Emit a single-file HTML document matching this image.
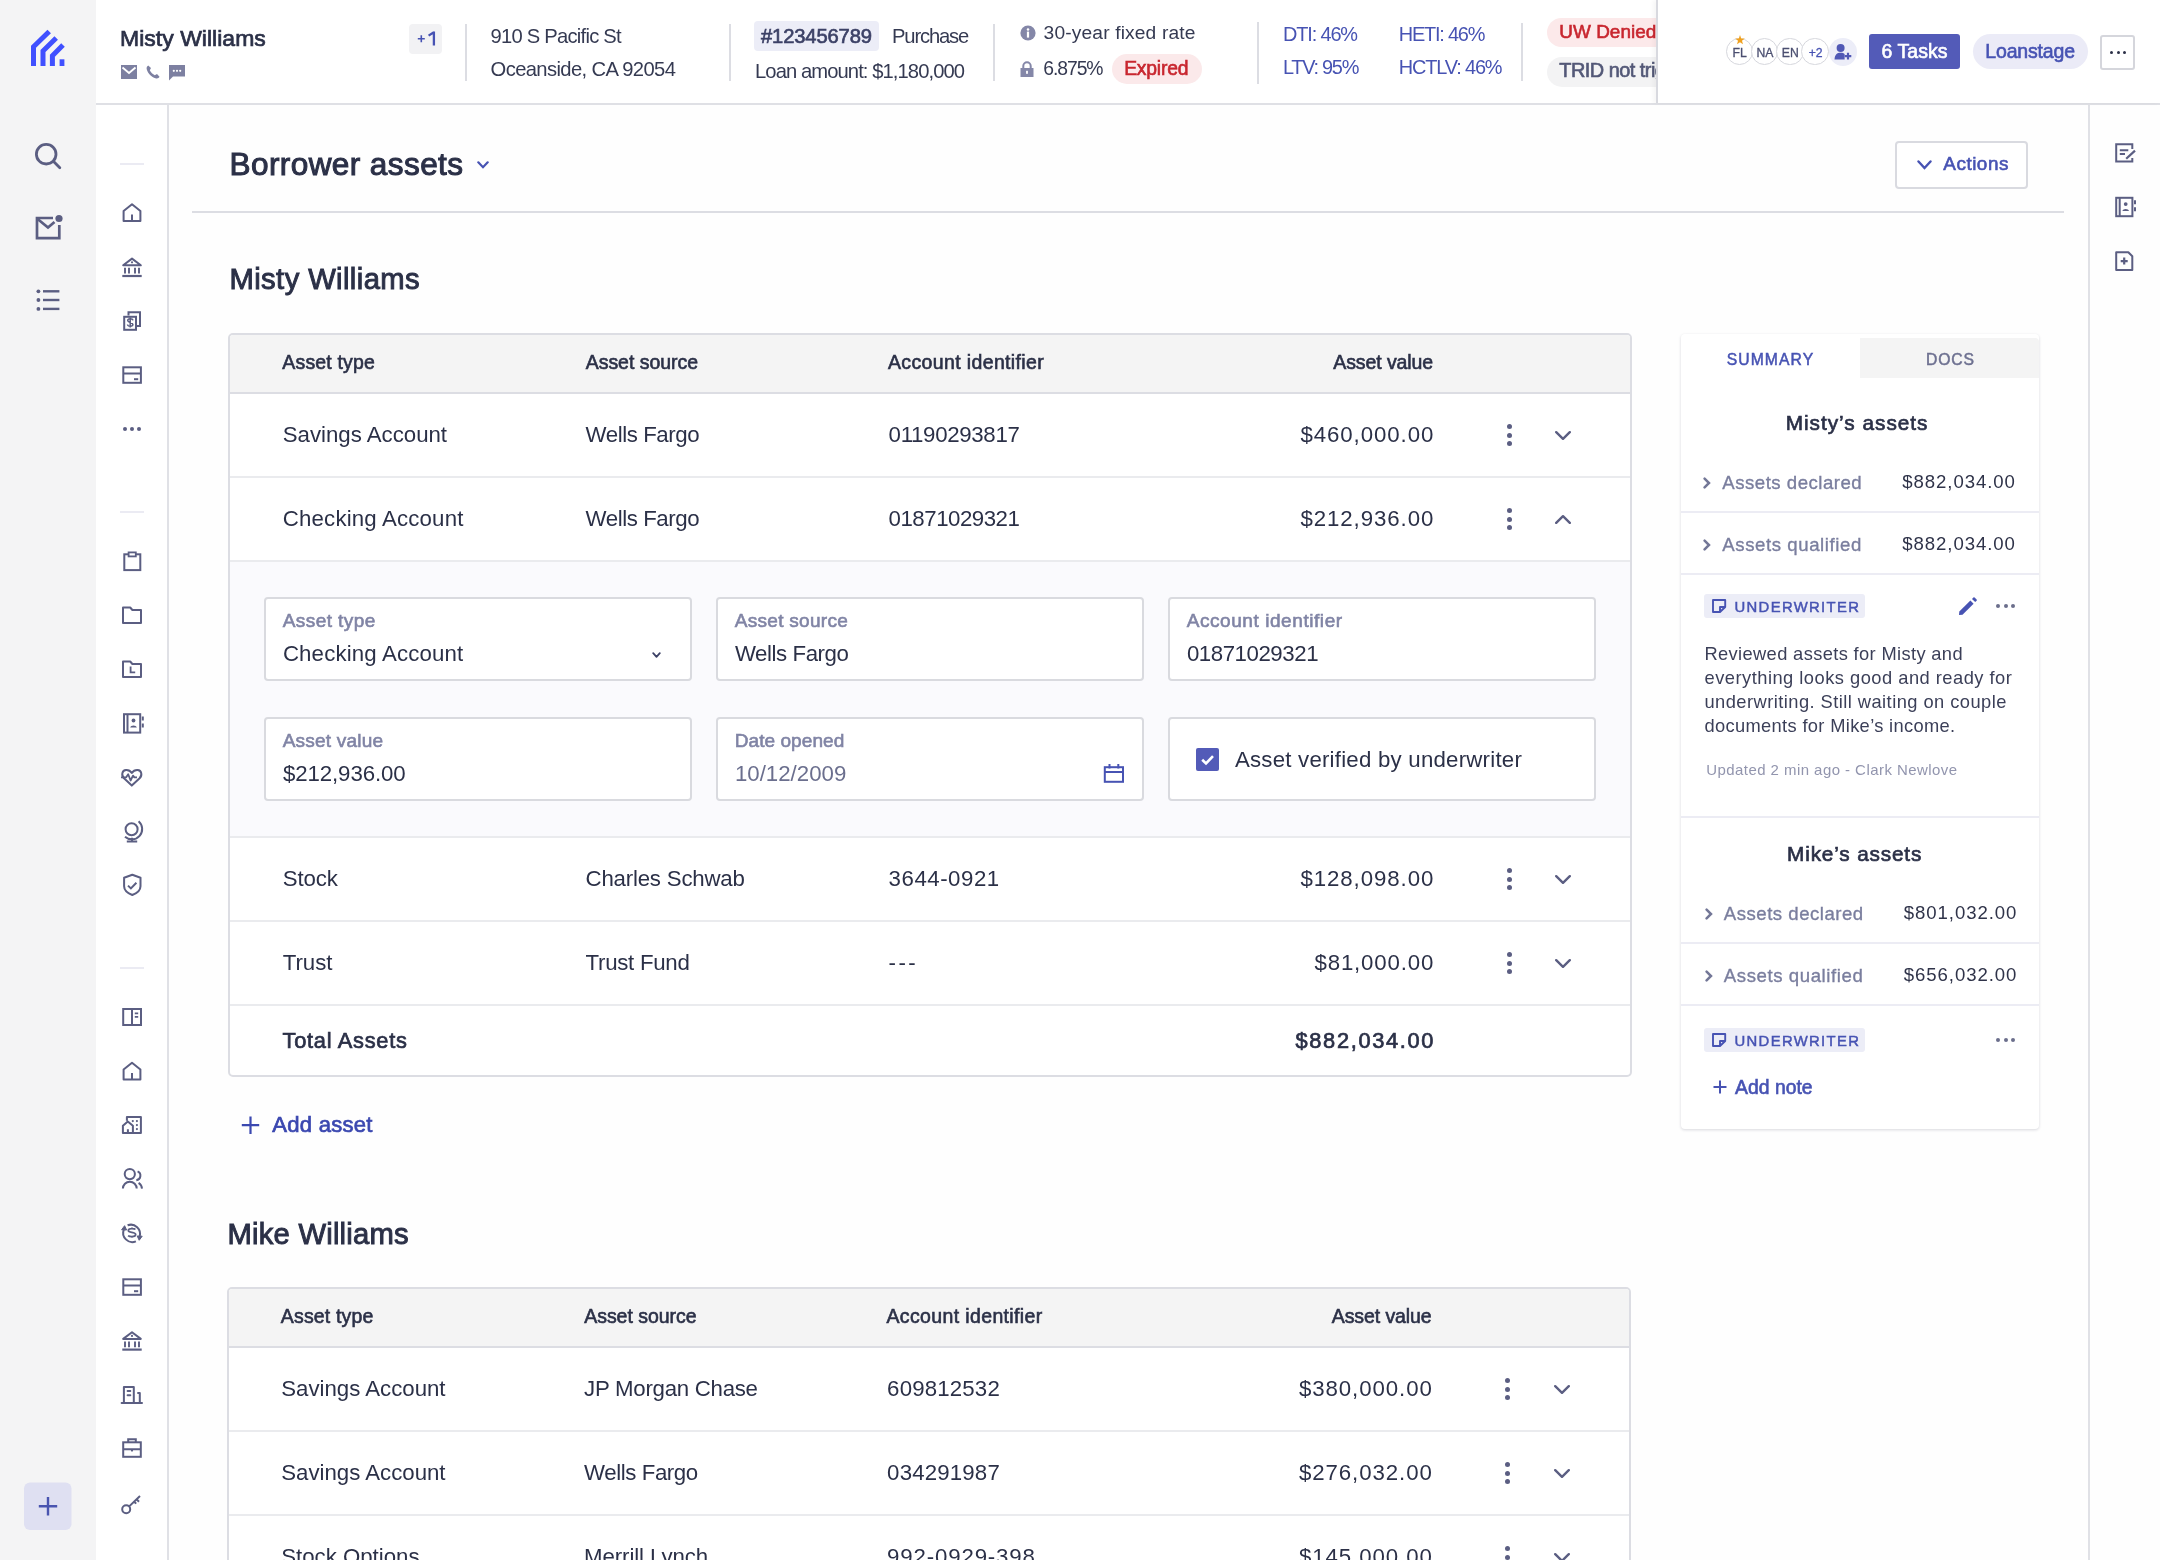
<!DOCTYPE html>
<html><head><meta charset="utf-8"><title>Borrower assets</title>
<style>
html,body{-webkit-font-smoothing:antialiased;margin:0;padding:0;width:2160px;height:1560px;overflow:hidden;background:#fefefe;font-family:"Liberation Sans",sans-serif;}
body>div,body>svg{position:absolute;}
.t{position:absolute;line-height:1;white-space:nowrap;transform:translateZ(0);}
</style></head><body>
<div style="left:0px;top:0px;width:96px;height:1560px;background:#f4f4f5"></div>
<div style="left:96px;top:0px;width:2064px;height:104px;background:#fff"></div>
<div style="left:96px;top:103px;width:2064px;height:2px;background:#dfe0e5"></div>
<div style="left:96px;top:105px;width:71px;height:1455px;background:#fff"></div>
<div style="left:167px;top:105px;width:2px;height:1455px;background:#e0e1e6"></div>
<div style="left:2088px;top:105px;width:2px;height:1455px;background:#e0e1e6"></div>
<div style="left:2090px;top:105px;width:70px;height:1455px;background:#fefefe"></div>
<div class="t" style="left:120.00px;top:27.00px;font-size:22.97px;color:#2b3047;letter-spacing:0.027px;-webkit-text-stroke:0.73px #2b3047;">Misty Williams</div>
<div style="left:409px;top:24px;width:33px;height:30px;background:#f2f2f4;border-radius:4px"></div>
<svg style="position:absolute;left:414px;top:28px;" width="24" height="20" viewBox="0 0 24 20"><path d="M7.3 7.2 V14.2 M3.8 10.7 H10.8" stroke="#4753b3" stroke-width="1.6"/><path d="M19.9 3.6 V17.4 M19.9 4.2 L14.6 7.6" stroke="#4753b3" stroke-width="2.3" stroke-linejoin="round"/></svg>
<svg style="position:absolute;left:121px;top:65px;" width="16" height="14" viewBox="0 0 16 14"><rect x="0" y="0" width="16" height="14" fill="#7d80a1"/><path d="M1.5 2.5 L8 8 L14.5 2.5" stroke="#fff" stroke-width="1.8" fill="none"/></svg>
<svg style="position:absolute;left:145px;top:64px;" width="16" height="16" viewBox="0 0 16 16"><path d="M3.2 1.5 C2 2.2 1.2 3.5 1.8 5.5 C3 9.5 6.5 13 10.5 14.2 C12.5 14.8 13.8 14 14.5 12.8 L12 10 L9.8 11.2 C7.8 10.2 5.8 8.2 4.8 6.2 L6 4 Z" fill="#7d80a1"/></svg>
<svg style="position:absolute;left:169px;top:65px;" width="16" height="16" viewBox="0 0 16 16"><path d="M0 0 H16 V11.5 H4 L0 15.5 Z" fill="#7d80a1"/><circle cx="4.8" cy="5.8" r="1.1" fill="#fff"/><circle cx="8" cy="5.8" r="1.1" fill="#fff"/><circle cx="11.2" cy="5.8" r="1.1" fill="#fff"/></svg>
<div style="left:464.5px;top:24px;width:2px;height:57px;background:#dcdde3"></div>
<div class="t" style="left:490.60px;top:26.00px;font-size:20.20px;color:#353a52;letter-spacing:-0.766px;">910 S Pacific St</div>
<div class="t" style="left:490.60px;top:59.00px;font-size:20.20px;color:#353a52;letter-spacing:-0.618px;">Oceanside, CA 92054</div>
<div style="left:729px;top:24px;width:2px;height:57px;background:#dcdde3"></div>
<div style="left:754px;top:21px;width:125px;height:30px;background:#ecedf7;border-radius:4px"></div>
<div class="t" style="left:761.00px;top:26.00px;font-size:20.20px;color:#3c4166;letter-spacing:-0.149px;-webkit-text-stroke:0.65px #3c4166;">#123456789</div>
<div class="t" style="left:892.00px;top:26.00px;font-size:20.20px;color:#353a52;letter-spacing:-1.148px;">Purchase</div>
<div class="t" style="left:755.00px;top:61.00px;font-size:20.20px;color:#353a52;letter-spacing:-0.911px;">Loan amount: $1,180,000</div>
<div style="left:993px;top:24px;width:2px;height:57px;background:#dcdde3"></div>
<svg style="position:absolute;left:1020px;top:25px;" width="16" height="16" viewBox="0 0 16 16"><circle cx="8" cy="8" r="7.6" fill="#8487a8"/><rect x="6.9" y="6.6" width="2.2" height="6" fill="#fff"/><circle cx="8" cy="4.4" r="1.25" fill="#fff"/></svg>
<div class="t" style="left:1043.60px;top:23.00px;font-size:19.19px;color:#353a52;letter-spacing:0.147px;">30-year fixed rate</div>
<svg style="position:absolute;left:1020px;top:61px;" width="14" height="16" viewBox="0 0 14 16"><path d="M3.3 7 V5 A3.7 3.7 0 0 1 10.7 5 V7" stroke="#8487a8" stroke-width="2" fill="none"/><rect x="0.5" y="7" width="13" height="9" fill="#8487a8"/><rect x="6.1" y="9.8" width="1.8" height="3" fill="#fff"/></svg>
<div class="t" style="left:1043.30px;top:59.00px;font-size:19.33px;color:#353a52;letter-spacing:-1.072px;">6.875%</div>
<div style="left:1111.5px;top:54px;width:90px;height:30px;background:#fbe9ea;border-radius:15px"></div>
<div class="t" style="left:1124.20px;top:59.00px;font-size:19.33px;color:#c8262f;letter-spacing:-0.207px;-webkit-text-stroke:0.62px #c8262f;">Expired</div>
<div style="left:1257px;top:22px;width:2px;height:62px;background:#dcdde3"></div>
<div class="t" style="left:1283.00px;top:25.00px;font-size:19.91px;color:#4753b3;letter-spacing:-1.134px;">DTI: 46%</div>
<div class="t" style="left:1283.00px;top:58.00px;font-size:19.91px;color:#4753b3;letter-spacing:-1.267px;">LTV: 95%</div>
<div class="t" style="left:1398.80px;top:25.00px;font-size:19.91px;color:#4753b3;letter-spacing:-1.202px;">HETI: 46%</div>
<div class="t" style="left:1398.80px;top:58.00px;font-size:19.91px;color:#4753b3;letter-spacing:-1.134px;">HCTLV: 46%</div>
<div style="left:1521px;top:23px;width:2px;height:58px;background:#dcdde3"></div>
<div style="left:1546.7px;top:18.2px;width:140px;height:29.2px;background:#fce9ea;border-radius:15px"></div>
<div class="t" style="left:1559.30px;top:23.00px;font-size:18.90px;color:#c8262f;letter-spacing:0.046px;-webkit-text-stroke:0.60px #c8262f;">UW Denied</div>
<div style="left:1546.7px;top:57px;width:160px;height:29.7px;background:#f3f3f4;border-radius:15px"></div>
<div class="t" style="left:1559.30px;top:61.00px;font-size:19.91px;color:#535877;letter-spacing:-0.520px;-webkit-text-stroke:0.64px #535877;">TRID not triggered</div>
<div style="left:1656px;top:0px;width:504px;height:103px;background:#fff;border-left:2px solid #d8d9df;box-shadow:-3px 0 4px rgba(0,0,0,0.04)"></div>
<div style="left:1725.5px;top:37.8px;width:25.5px;height:25.5px;border:1.5px solid #d6d7dd;border-radius:50%;background:#fff"></div>
<div style="left:1750.8px;top:37.8px;width:25.5px;height:25.5px;border:1.5px solid #d6d7dd;border-radius:50%;background:#fff"></div>
<div style="left:1776.0px;top:37.8px;width:25.5px;height:25.5px;border:1.5px solid #d6d7dd;border-radius:50%;background:#fff"></div>
<div style="left:1801.3px;top:37.8px;width:25.5px;height:25.5px;border:1.5px solid #d6d7dd;border-radius:50%;background:#fff"></div>
<div class="t" style="left:1732.58px;top:47.00px;font-size:12.21px;color:#4b4f70;letter-spacing:0.000px;-webkit-text-stroke:0.30px #4b4f70;">FL</div>
<div class="t" style="left:1756.53px;top:47.00px;font-size:12.21px;color:#4b4f70;letter-spacing:0.000px;-webkit-text-stroke:0.30px #4b4f70;">NA</div>
<div class="t" style="left:1781.83px;top:47.00px;font-size:12.21px;color:#4b4f70;letter-spacing:0.000px;-webkit-text-stroke:0.30px #4b4f70;">EN</div>
<div class="t" style="left:1808.65px;top:47.00px;font-size:12.21px;color:#4753b3;letter-spacing:0.000px;-webkit-text-stroke:0.30px #4753b3;">+2</div>
<div style="left:1828.5px;top:37.8px;width:28.5px;height:28.5px;border-radius:50%;background:#ecedf8"></div>
<svg style="position:absolute;left:1834px;top:43px;" width="18" height="18" viewBox="0 0 18 18"><circle cx="6.6" cy="5" r="4" fill="#5058b5"/><path d="M0.5 16.5 C0.8 11.5 3 9.8 6.6 9.8 C8.5 9.8 9.8 10.3 10.6 11 L10.6 16.5 Z" fill="#5058b5"/><path d="M14 9.8 V16.4 M10.7 13.1 H17.3" stroke="#5058b5" stroke-width="2.2"/></svg>
<svg style="position:absolute;left:1735px;top:35px;" width="10" height="10" viewBox="0 0 10 10"><path d="M5 0 L6.2 3.4 L9.8 3.5 L7 5.7 L8 9.2 L5 7.2 L2 9.2 L3 5.7 L0.2 3.5 L3.8 3.4 Z" fill="#f0a11f"/></svg>
<div style="left:1869.3px;top:33.8px;width:91px;height:35.6px;background:#535bb8;border-radius:3px"></div>
<div class="t" style="left:1881.40px;top:42.00px;font-size:19.48px;color:#fff;letter-spacing:0.091px;-webkit-text-stroke:0.62px #fff;">6 Tasks</div>
<div style="left:1972.6px;top:33.8px;width:115px;height:35.6px;background:#ebebf7;border-radius:18px"></div>
<div class="t" style="left:1985.30px;top:42.00px;font-size:19.48px;color:#4753b3;letter-spacing:-0.148px;-webkit-text-stroke:0.62px #4753b3;">Loanstage</div>
<div style="left:2100.3px;top:34.5px;width:35.2px;height:35px;box-sizing:border-box;border:2px solid #d5d6dc;border-radius:3px;background:#fff"></div>
<div style="left:2110.3px;top:50.5px;width:3px;height:3px;border-radius:50%;background:#2b3047"></div>
<div style="left:2116.5px;top:50.5px;width:3px;height:3px;border-radius:50%;background:#2b3047"></div>
<div style="left:2122.7px;top:50.5px;width:3px;height:3px;border-radius:50%;background:#2b3047"></div>
<div style="left:228px;top:333px;width:1404px;height:744px;box-sizing:border-box;border:2px solid #dcdde3;border-radius:5px;background:#fff;overflow:hidden"></div>
<div style="left:230px;top:335px;width:1400px;height:57px;background:#f4f4f4;border-radius:3px 3px 0 0"></div>
<div style="left:230px;top:391.5px;width:1400px;height:2px;background:#dcdde3"></div>
<div class="t" style="left:282.30px;top:353.00px;font-size:19.48px;color:#2b3047;letter-spacing:0.184px;-webkit-text-stroke:0.62px #2b3047;">Asset type</div>
<div class="t" style="left:585.70px;top:353.00px;font-size:19.48px;color:#2b3047;letter-spacing:-0.011px;-webkit-text-stroke:0.62px #2b3047;">Asset source</div>
<div class="t" style="left:888.00px;top:353.00px;font-size:19.48px;color:#2b3047;letter-spacing:0.377px;-webkit-text-stroke:0.62px #2b3047;">Account identifier</div>
<div class="t" style="left:1333.30px;top:353.00px;font-size:19.48px;color:#2b3047;letter-spacing:-0.080px;-webkit-text-stroke:0.62px #2b3047;">Asset value</div>
<div class="t" style="left:282.80px;top:424.00px;font-size:22.24px;color:#2b3047;letter-spacing:-0.010px;">Savings Account</div>
<div class="t" style="left:585.60px;top:424.00px;font-size:22.24px;color:#2b3047;letter-spacing:-0.423px;">Wells Fargo</div>
<div class="t" style="left:888.60px;top:424.00px;font-size:22.24px;color:#2b3047;letter-spacing:-0.317px;">01190293817</div>
<div class="t" style="left:1300.50px;top:424.00px;font-size:22.24px;color:#2b3047;letter-spacing:0.914px;">$460,000.00</div>
<div style="left:1506.7px;top:423.9px;width:5px;height:5px;border-radius:50%;background:#5b5e82"></div>
<div style="left:1506.7px;top:432.5px;width:5px;height:5px;border-radius:50%;background:#5b5e82"></div>
<div style="left:1506.7px;top:441.1px;width:5px;height:5px;border-radius:50%;background:#5b5e82"></div>
<svg style="position:absolute;left:1555px;top:430.8px;" width="16" height="9" viewBox="0 0 16 9"><path d="M1.2 1.2 L8.0 7.8 L14.8 1.2" stroke="#5b5e82" stroke-width="2.4" fill="none" stroke-linecap="round" stroke-linejoin="round"/></svg>
<div style="left:230px;top:475.5px;width:1400px;height:2px;background:#eaebee"></div>
<div class="t" style="left:282.80px;top:508.00px;font-size:22.24px;color:#2b3047;letter-spacing:0.173px;">Checking Account</div>
<div class="t" style="left:585.60px;top:508.00px;font-size:22.24px;color:#2b3047;letter-spacing:-0.423px;">Wells Fargo</div>
<div class="t" style="left:888.60px;top:508.00px;font-size:22.24px;color:#2b3047;letter-spacing:-0.482px;">01871029321</div>
<div class="t" style="left:1300.50px;top:508.00px;font-size:22.24px;color:#2b3047;letter-spacing:0.914px;">$212,936.00</div>
<div style="left:1506.7px;top:507.9px;width:5px;height:5px;border-radius:50%;background:#5b5e82"></div>
<div style="left:1506.7px;top:516.5px;width:5px;height:5px;border-radius:50%;background:#5b5e82"></div>
<div style="left:1506.7px;top:525.1px;width:5px;height:5px;border-radius:50%;background:#5b5e82"></div>
<svg style="position:absolute;left:1555px;top:514.8px;" width="16" height="9" viewBox="0 0 16 9"><path d="M1.2 7.8 L8.0 1.2 L14.8 7.8" stroke="#5b5e82" stroke-width="2.4" fill="none" stroke-linecap="round" stroke-linejoin="round"/></svg>
<div style="left:230px;top:559.5px;width:1400px;height:2px;background:#eaebee"></div>
<div style="left:230px;top:561.5px;width:1400px;height:274px;background:#fafafd"></div>
<div style="left:230px;top:835.5px;width:1400px;height:2px;background:#eaebee"></div>
<div class="t" style="left:282.80px;top:868.00px;font-size:22.24px;color:#2b3047;letter-spacing:-0.130px;">Stock</div>
<div class="t" style="left:585.60px;top:868.00px;font-size:22.24px;color:#2b3047;letter-spacing:-0.204px;">Charles Schwab</div>
<div class="t" style="left:888.60px;top:868.00px;font-size:22.24px;color:#2b3047;letter-spacing:0.529px;">3644-0921</div>
<div class="t" style="left:1300.50px;top:868.00px;font-size:22.24px;color:#2b3047;letter-spacing:0.914px;">$128,098.00</div>
<div style="left:1506.7px;top:867.9px;width:5px;height:5px;border-radius:50%;background:#5b5e82"></div>
<div style="left:1506.7px;top:876.5px;width:5px;height:5px;border-radius:50%;background:#5b5e82"></div>
<div style="left:1506.7px;top:885.1px;width:5px;height:5px;border-radius:50%;background:#5b5e82"></div>
<svg style="position:absolute;left:1555px;top:874.8px;" width="16" height="9" viewBox="0 0 16 9"><path d="M1.2 1.2 L8.0 7.8 L14.8 1.2" stroke="#5b5e82" stroke-width="2.4" fill="none" stroke-linecap="round" stroke-linejoin="round"/></svg>
<div style="left:230px;top:919.5px;width:1400px;height:2px;background:#eaebee"></div>
<div class="t" style="left:282.80px;top:952.00px;font-size:22.24px;color:#2b3047;letter-spacing:-0.061px;">Trust</div>
<div class="t" style="left:585.60px;top:952.00px;font-size:22.24px;color:#2b3047;letter-spacing:-0.279px;">Trust Fund</div>
<div class="t" style="left:888.60px;top:952.00px;font-size:22.24px;color:#2b3047;letter-spacing:2.412px;">---</div>
<div class="t" style="left:1314.50px;top:952.00px;font-size:22.24px;color:#2b3047;letter-spacing:0.832px;">$81,000.00</div>
<div style="left:1506.7px;top:951.9px;width:5px;height:5px;border-radius:50%;background:#5b5e82"></div>
<div style="left:1506.7px;top:960.5px;width:5px;height:5px;border-radius:50%;background:#5b5e82"></div>
<div style="left:1506.7px;top:969.1px;width:5px;height:5px;border-radius:50%;background:#5b5e82"></div>
<svg style="position:absolute;left:1555px;top:958.8px;" width="16" height="9" viewBox="0 0 16 9"><path d="M1.2 1.2 L8.0 7.8 L14.8 1.2" stroke="#5b5e82" stroke-width="2.4" fill="none" stroke-linecap="round" stroke-linejoin="round"/></svg>
<div style="left:230px;top:1003.5px;width:1400px;height:2px;background:#eaebee"></div>
<div class="t" style="left:282.60px;top:1030.00px;font-size:21.80px;color:#2b3047;letter-spacing:0.725px;-webkit-text-stroke:0.70px #2b3047;">Total Assets</div>
<div class="t" style="left:1295.50px;top:1030.00px;font-size:21.80px;color:#2b3047;letter-spacing:1.678px;-webkit-text-stroke:0.70px #2b3047;">$882,034.00</div>
<div style="left:264px;top:597px;width:428px;height:84px;box-sizing:border-box;border:2px solid #d9dadf;border-radius:4px;background:#fff"></div>
<div class="t" style="left:282.70px;top:611.00px;font-size:19.04px;color:#8084a5;letter-spacing:0.421px;-webkit-text-stroke:0.61px #8084a5;">Asset type</div>
<div class="t" style="left:282.90px;top:643.00px;font-size:22.24px;color:#2b3047;letter-spacing:0.153px;">Checking Account</div>
<svg style="position:absolute;left:652px;top:651.5px;" width="9" height="6" viewBox="0 0 9 6"><path d="M1.2 1.2 L4.5 4.8 L7.8 1.2" stroke="#3c4166" stroke-width="1.8" fill="none" stroke-linecap="round" stroke-linejoin="round"/></svg>
<div style="left:716px;top:597px;width:428px;height:84px;box-sizing:border-box;border:2px solid #d9dadf;border-radius:4px;background:#fff"></div>
<div class="t" style="left:734.70px;top:611.00px;font-size:19.04px;color:#8084a5;letter-spacing:0.289px;-webkit-text-stroke:0.61px #8084a5;">Asset source</div>
<div class="t" style="left:734.90px;top:643.00px;font-size:22.24px;color:#2b3047;letter-spacing:-0.423px;">Wells Fargo</div>
<div style="left:1168px;top:597px;width:428px;height:84px;box-sizing:border-box;border:2px solid #d9dadf;border-radius:4px;background:#fff"></div>
<div class="t" style="left:1186.70px;top:611.00px;font-size:19.04px;color:#8084a5;letter-spacing:0.556px;-webkit-text-stroke:0.61px #8084a5;">Account identifier</div>
<div class="t" style="left:1186.90px;top:643.00px;font-size:22.24px;color:#2b3047;letter-spacing:-0.442px;">01871029321</div>
<div style="left:264px;top:717px;width:428px;height:84px;box-sizing:border-box;border:2px solid #d9dadf;border-radius:4px;background:#fff"></div>
<div class="t" style="left:282.70px;top:731.00px;font-size:19.04px;color:#8084a5;letter-spacing:0.208px;-webkit-text-stroke:0.61px #8084a5;">Asset value</div>
<div class="t" style="left:282.90px;top:763.00px;font-size:22.24px;color:#2b3047;letter-spacing:-0.086px;">$212,936.00</div>
<div style="left:716px;top:717px;width:428px;height:84px;box-sizing:border-box;border:2px solid #d9dadf;border-radius:4px;background:#fff"></div>
<div class="t" style="left:734.70px;top:731.00px;font-size:19.04px;color:#8084a5;letter-spacing:0.058px;-webkit-text-stroke:0.61px #8084a5;">Date opened</div>
<div class="t" style="left:734.90px;top:763.00px;font-size:22.24px;color:#6b6f8e;letter-spacing:0.010px;">10/12/2009</div>
<svg style="position:absolute;left:1103px;top:763px;" width="22" height="20" viewBox="0 0 22 20"><rect x="1.8" y="4.2" width="18.2" height="14.6" stroke="#4753b3" stroke-width="2" fill="none"/><path d="M1.8 9 H20" stroke="#4753b3" stroke-width="2"/><path d="M6.5 1 V5.5 M15.3 1 V5.5" stroke="#4753b3" stroke-width="2"/></svg>
<div style="left:1168px;top:717px;width:428px;height:84px;box-sizing:border-box;border:2px solid #d9dadf;border-radius:4px;background:#fff"></div>
<div style="left:1195.7px;top:747.6px;width:23px;height:23px;background:#535bb8;border-radius:2px"></div>
<svg style="position:absolute;left:1195.7px;top:747.6px;" width="23" height="23" viewBox="0 0 23 23"><path d="M6.2 11.8 L10 15.5 L17 8.2" stroke="#fff" stroke-width="2.6" fill="none"/></svg>
<div class="t" style="left:1234.90px;top:749.00px;font-size:22.24px;color:#2b3047;letter-spacing:0.229px;">Asset verified by underwriter</div>
<svg style="position:absolute;left:241px;top:1116px;" width="19" height="19" viewBox="0 0 19 19"><path d="M9.5 0.5 V18 M0.8 9.2 H18.2" stroke="#3b48b0" stroke-width="2.2"/></svg>
<div class="t" style="left:272.20px;top:1114.00px;font-size:22.09px;color:#3b48b0;letter-spacing:0.264px;-webkit-text-stroke:0.71px #3b48b0;">Add asset</div>
<div style="left:226.5px;top:1287px;width:1404px;height:353px;box-sizing:border-box;border:2px solid #dcdde3;border-radius:5px;background:#fff;overflow:hidden"></div>
<div style="left:228.5px;top:1289px;width:1400px;height:57px;background:#f4f4f4;border-radius:3px 3px 0 0"></div>
<div style="left:228.5px;top:1345.5px;width:1400px;height:2px;background:#dcdde3"></div>
<div class="t" style="left:280.80px;top:1307.00px;font-size:19.48px;color:#2b3047;letter-spacing:0.184px;-webkit-text-stroke:0.62px #2b3047;">Asset type</div>
<div class="t" style="left:584.20px;top:1307.00px;font-size:19.48px;color:#2b3047;letter-spacing:-0.011px;-webkit-text-stroke:0.62px #2b3047;">Asset source</div>
<div class="t" style="left:886.50px;top:1307.00px;font-size:19.48px;color:#2b3047;letter-spacing:0.377px;-webkit-text-stroke:0.62px #2b3047;">Account identifier</div>
<div class="t" style="left:1331.80px;top:1307.00px;font-size:19.48px;color:#2b3047;letter-spacing:-0.080px;-webkit-text-stroke:0.62px #2b3047;">Asset value</div>
<div class="t" style="left:281.30px;top:1378.00px;font-size:22.24px;color:#2b3047;letter-spacing:-0.010px;">Savings Account</div>
<div class="t" style="left:584.10px;top:1378.00px;font-size:22.24px;color:#2b3047;letter-spacing:-0.263px;">JP Morgan Chase</div>
<div class="t" style="left:887.10px;top:1378.00px;font-size:22.24px;color:#2b3047;letter-spacing:0.172px;">609812532</div>
<div class="t" style="left:1299.00px;top:1378.00px;font-size:22.24px;color:#2b3047;letter-spacing:0.914px;">$380,000.00</div>
<div style="left:1505.2px;top:1377.9px;width:5px;height:5px;border-radius:50%;background:#5b5e82"></div>
<div style="left:1505.2px;top:1386.5px;width:5px;height:5px;border-radius:50%;background:#5b5e82"></div>
<div style="left:1505.2px;top:1395.1px;width:5px;height:5px;border-radius:50%;background:#5b5e82"></div>
<svg style="position:absolute;left:1553.5px;top:1384.8px;" width="16" height="9" viewBox="0 0 16 9"><path d="M1.2 1.2 L8.0 7.8 L14.8 1.2" stroke="#5b5e82" stroke-width="2.4" fill="none" stroke-linecap="round" stroke-linejoin="round"/></svg>
<div style="left:228.5px;top:1429.5px;width:1400px;height:2px;background:#eaebee"></div>
<div class="t" style="left:281.30px;top:1462.00px;font-size:22.24px;color:#2b3047;letter-spacing:-0.010px;">Savings Account</div>
<div class="t" style="left:584.10px;top:1462.00px;font-size:22.24px;color:#2b3047;letter-spacing:-0.412px;">Wells Fargo</div>
<div class="t" style="left:887.10px;top:1462.00px;font-size:22.24px;color:#2b3047;letter-spacing:0.172px;">034291987</div>
<div class="t" style="left:1299.00px;top:1462.00px;font-size:22.24px;color:#2b3047;letter-spacing:0.914px;">$276,032.00</div>
<div style="left:1505.2px;top:1461.9px;width:5px;height:5px;border-radius:50%;background:#5b5e82"></div>
<div style="left:1505.2px;top:1470.5px;width:5px;height:5px;border-radius:50%;background:#5b5e82"></div>
<div style="left:1505.2px;top:1479.1px;width:5px;height:5px;border-radius:50%;background:#5b5e82"></div>
<svg style="position:absolute;left:1553.5px;top:1468.8px;" width="16" height="9" viewBox="0 0 16 9"><path d="M1.2 1.2 L8.0 7.8 L14.8 1.2" stroke="#5b5e82" stroke-width="2.4" fill="none" stroke-linecap="round" stroke-linejoin="round"/></svg>
<div style="left:228.5px;top:1513.5px;width:1400px;height:2px;background:#eaebee"></div>
<div class="t" style="left:281.30px;top:1546.00px;font-size:22.24px;color:#2b3047;letter-spacing:-0.016px;">Stock Options</div>
<div class="t" style="left:584.10px;top:1546.00px;font-size:22.24px;color:#2b3047;letter-spacing:-0.101px;">Merrill Lynch</div>
<div class="t" style="left:887.10px;top:1546.00px;font-size:22.24px;color:#2b3047;letter-spacing:0.850px;">992-0929-398</div>
<div class="t" style="left:1299.00px;top:1546.00px;font-size:22.24px;color:#2b3047;letter-spacing:0.914px;">$145,000.00</div>
<div style="left:1505.2px;top:1545.9px;width:5px;height:5px;border-radius:50%;background:#5b5e82"></div>
<div style="left:1505.2px;top:1554.5px;width:5px;height:5px;border-radius:50%;background:#5b5e82"></div>
<div style="left:1505.2px;top:1563.1px;width:5px;height:5px;border-radius:50%;background:#5b5e82"></div>
<svg style="position:absolute;left:1553.5px;top:1552.8px;" width="16" height="9" viewBox="0 0 16 9"><path d="M1.2 1.2 L8.0 7.8 L14.8 1.2" stroke="#5b5e82" stroke-width="2.4" fill="none" stroke-linecap="round" stroke-linejoin="round"/></svg>
<div class="t" style="left:229.50px;top:149.00px;font-size:31.54px;color:#2b3047;letter-spacing:0.409px;-webkit-text-stroke:1.01px #2b3047;">Borrower assets</div>
<svg style="position:absolute;left:477px;top:161px;" width="12" height="8" viewBox="0 0 12 8"><path d="M1.3 1.3 L6 6.2 L10.7 1.3" stroke="#4753b3" stroke-width="2.2" fill="none" stroke-linecap="round"/></svg>
<div style="left:192px;top:211px;width:1872px;height:2px;background:#dcdde3"></div>
<div class="t" style="left:229.50px;top:265.00px;font-size:29.22px;color:#2b3047;letter-spacing:0.392px;-webkit-text-stroke:0.93px #2b3047;">Misty Williams</div>
<div class="t" style="left:227.50px;top:1220.00px;font-size:29.22px;color:#2b3047;letter-spacing:0.214px;-webkit-text-stroke:0.93px #2b3047;">Mike Williams</div>
<div style="left:1895px;top:141px;width:133px;height:48px;box-sizing:border-box;border:2px solid #d9dae0;border-radius:4px;background:#fff"></div>
<svg style="position:absolute;left:1917px;top:160px;" width="15" height="10" viewBox="0 0 15 10"><path d="M1.5 1.5 L7.5 8 L13.5 1.5" stroke="#4753b3" stroke-width="2.4" fill="none" stroke-linecap="round"/></svg>
<div class="t" style="left:1943.30px;top:155.00px;font-size:18.90px;color:#4753b3;letter-spacing:0.520px;-webkit-text-stroke:0.60px #4753b3;">Actions</div>
<div style="left:1681px;top:334px;width:358px;height:795px;background:#fff;box-shadow:0 1px 3px rgba(30,32,60,0.17);border-radius:4px"></div>
<div style="left:1860px;top:338px;width:179px;height:40px;background:#f4f4f4;border-radius:0 4px 0 0"></div>
<div class="t" style="left:1726.70px;top:352.00px;font-size:15.70px;color:#4753b3;letter-spacing:1.106px;-webkit-text-stroke:0.50px #4753b3;">SUMMARY</div>
<div class="t" style="left:1926.00px;top:352.00px;font-size:15.70px;color:#6d7090;letter-spacing:0.880px;-webkit-text-stroke:0.50px #6d7090;">DOCS</div>
<div class="t" style="left:1785.70px;top:413.00px;font-size:20.78px;color:#2b3047;letter-spacing:0.994px;-webkit-text-stroke:0.67px #2b3047;">Misty’s assets</div>
<svg style="position:absolute;left:1702px;top:476.8px;" width="10" height="12" viewBox="0 0 10 12"><path d="M2.6 1.6 L7 6 L2.6 10.4" stroke="#737797" stroke-width="2.5" fill="none" stroke-linecap="round"/></svg>
<div class="t" style="left:1722.30px;top:474.00px;font-size:18.60px;color:#7a7e9e;letter-spacing:0.505px;-webkit-text-stroke:0.35px #7a7e9e;">Assets declared</div>
<div class="t" style="left:1902.20px;top:473.00px;font-size:18.60px;color:#2f3349;letter-spacing:0.937px;">$882,034.00</div>
<div style="left:1681px;top:511.0px;width:358px;height:2px;background:#ececf4"></div>
<svg style="position:absolute;left:1702px;top:538.8px;" width="10" height="12" viewBox="0 0 10 12"><path d="M2.6 1.6 L7 6 L2.6 10.4" stroke="#737797" stroke-width="2.5" fill="none" stroke-linecap="round"/></svg>
<div class="t" style="left:1722.30px;top:536.00px;font-size:18.60px;color:#7a7e9e;letter-spacing:0.582px;-webkit-text-stroke:0.35px #7a7e9e;">Assets qualified</div>
<div class="t" style="left:1902.20px;top:535.00px;font-size:18.60px;color:#2f3349;letter-spacing:0.937px;">$882,034.00</div>
<div style="left:1681px;top:572.5px;width:358px;height:2px;background:#ececf4"></div>
<div style="left:1704.2px;top:594.1px;width:161.3px;height:24px;background:#ecedf7;border-radius:3px"></div>
<svg style="position:absolute;left:1711.5px;top:599.1px;" width="15" height="14" viewBox="0 0 15 14"><path d="M1 1 H13.2 V8 L8 13 H1 Z M13.2 8 H8 V13" stroke="#4753b3" stroke-width="1.9" fill="none" stroke-linejoin="round"/></svg>
<div class="t" style="left:1734.50px;top:600.00px;font-size:14.83px;color:#4753b3;letter-spacing:1.348px;-webkit-text-stroke:0.47px #4753b3;">UNDERWRITER</div>
<div style="left:1996.2px;top:603.9px;width:4px;height:4px;border-radius:50%;background:#6b6e8c"></div>
<div style="left:2003.7px;top:603.9px;width:4px;height:4px;border-radius:50%;background:#6b6e8c"></div>
<div style="left:2011.2px;top:603.9px;width:4px;height:4px;border-radius:50%;background:#6b6e8c"></div>
<svg style="position:absolute;left:1958px;top:597px;" width="20" height="19" viewBox="0 0 20 19"><path d="M1 18 L1.3 14.6 L12.4 3.5 L15.6 6.7 L4.5 17.8 Z" fill="#4753b3"/><path d="M14 1.9 L15.4 0.5 Q16 0 16.6 0.5 L18.6 2.5 Q19.1 3.1 18.6 3.7 L17.2 5.1 Z" fill="#4753b3"/></svg>
<div class="t" style="left:1704.50px;top:645.00px;font-size:18.31px;color:#3b3f58;letter-spacing:0.355px;">Reviewed assets for Misty and</div>
<div class="t" style="left:1704.50px;top:669.00px;font-size:18.31px;color:#3b3f58;letter-spacing:0.484px;">everything looks good and ready for</div>
<div class="t" style="left:1704.50px;top:693.00px;font-size:18.31px;color:#3b3f58;letter-spacing:0.446px;">underwriting. Still waiting on couple</div>
<div class="t" style="left:1704.50px;top:717.00px;font-size:18.31px;color:#3b3f58;letter-spacing:0.332px;">documents for Mike’s income.</div>
<div class="t" style="left:1706.20px;top:763.00px;font-size:14.97px;color:#9295ae;letter-spacing:0.457px;">Updated 2 min ago - Clark Newlove</div>
<div style="left:1681px;top:815.5px;width:358px;height:2px;background:#ececf4"></div>
<div class="t" style="left:1787.05px;top:844.00px;font-size:20.78px;color:#2b3047;letter-spacing:0.837px;-webkit-text-stroke:0.67px #2b3047;">Mike’s assets</div>
<svg style="position:absolute;left:1703.5px;top:907.8px;" width="10" height="12" viewBox="0 0 10 12"><path d="M2.6 1.6 L7 6 L2.6 10.4" stroke="#737797" stroke-width="2.5" fill="none" stroke-linecap="round"/></svg>
<div class="t" style="left:1723.80px;top:905.00px;font-size:18.60px;color:#7a7e9e;letter-spacing:0.505px;-webkit-text-stroke:0.35px #7a7e9e;">Assets declared</div>
<div class="t" style="left:1903.70px;top:904.00px;font-size:18.60px;color:#2f3349;letter-spacing:0.937px;">$801,032.00</div>
<div style="left:1681px;top:942.0px;width:358px;height:2px;background:#ececf4"></div>
<svg style="position:absolute;left:1703.5px;top:969.8px;" width="10" height="12" viewBox="0 0 10 12"><path d="M2.6 1.6 L7 6 L2.6 10.4" stroke="#737797" stroke-width="2.5" fill="none" stroke-linecap="round"/></svg>
<div class="t" style="left:1723.80px;top:967.00px;font-size:18.60px;color:#7a7e9e;letter-spacing:0.582px;-webkit-text-stroke:0.35px #7a7e9e;">Assets qualified</div>
<div class="t" style="left:1903.70px;top:966.00px;font-size:18.60px;color:#2f3349;letter-spacing:0.937px;">$656,032.00</div>
<div style="left:1681px;top:1003.5px;width:358px;height:2px;background:#ececf4"></div>
<div style="left:1704.2px;top:1028px;width:161.3px;height:24px;background:#ecedf7;border-radius:3px"></div>
<svg style="position:absolute;left:1711.5px;top:1033px;" width="15" height="14" viewBox="0 0 15 14"><path d="M1 1 H13.2 V8 L8 13 H1 Z M13.2 8 H8 V13" stroke="#4753b3" stroke-width="1.9" fill="none" stroke-linejoin="round"/></svg>
<div class="t" style="left:1734.50px;top:1034.00px;font-size:14.83px;color:#4753b3;letter-spacing:1.348px;-webkit-text-stroke:0.47px #4753b3;">UNDERWRITER</div>
<div style="left:1996.2px;top:1037.8px;width:4px;height:4px;border-radius:50%;background:#6b6e8c"></div>
<div style="left:2003.7px;top:1037.8px;width:4px;height:4px;border-radius:50%;background:#6b6e8c"></div>
<div style="left:2011.2px;top:1037.8px;width:4px;height:4px;border-radius:50%;background:#6b6e8c"></div>
<svg style="position:absolute;left:1713px;top:1080px;" width="14" height="14" viewBox="0 0 14 14"><path d="M7 0.5 V13.5 M0.5 7 H13.5" stroke="#4753b3" stroke-width="2"/></svg>
<div class="t" style="left:1735.00px;top:1078.00px;font-size:19.33px;color:#4753b3;letter-spacing:0.033px;-webkit-text-stroke:0.62px #4753b3;">Add note</div>
<svg style="position:absolute;left:0;top:0" width="2160" height="1560" viewBox="0 0 2160 1560"><path d="M33.5 66 V46.8 L49.2 31.5" stroke="#4050ff" stroke-width="5" fill="none" stroke-linejoin="miter"/>
<path d="M43 66 V51 L56.2 38" stroke="#4050ff" stroke-width="5" fill="none"/>
<path d="M52.4 66 V55.8 L63 45" stroke="#4050ff" stroke-width="5" fill="none"/>
<rect x="59.6" y="59.3" width="4.8" height="6.7" fill="#4050ff"/>
<circle cx="46.2" cy="154.2" r="9.8" stroke="#5b5e82" stroke-width="2.8" fill="none"/><path d="M53.6 161.6 L59.8 167.8" stroke="#5b5e82" stroke-width="2.8" stroke-linecap="round"/>
<path d="M53 218 H37 V238.2 H59.3 V225" stroke="#5b5e82" stroke-width="2.7" fill="none"/><path d="M37 218.5 L48 227.6 L54.5 222" stroke="#5b5e82" stroke-width="2.7" fill="none"/><circle cx="59" cy="218.5" r="4.6" fill="#f4f4f5"/><circle cx="59" cy="218.5" r="3.6" fill="#5b5e82"/>
<circle cx="38.4" cy="291.3" r="1.9" fill="#5b5e82"/><path d="M43 291.3 H59.4" stroke="#5b5e82" stroke-width="2.4"/>
<circle cx="38.4" cy="300" r="1.9" fill="#5b5e82"/><path d="M43 300 H59.4" stroke="#5b5e82" stroke-width="2.4"/>
<circle cx="38.4" cy="308.9" r="1.9" fill="#5b5e82"/><path d="M43 308.9 H59.4" stroke="#5b5e82" stroke-width="2.4"/>
<rect x="24" y="1482.5" width="47.5" height="47.5" rx="6" fill="#dfe0f2"/><path d="M48 1497 V1515.5 M38.8 1506.2 H57.2" stroke="#4a55b0" stroke-width="2.4"/>
<rect x="120" y="163" width="24" height="2" fill="#ebebf3"/>
<rect x="120" y="511" width="24" height="2" fill="#ebebf3"/>
<rect x="120" y="967" width="24" height="2" fill="#ebebf3"/>
<path d="M123.6 221 V211 L132 204.3 L140.4 211 V221 Z M132 221 V214.5" stroke="#5b5e82" stroke-width="2" fill="none" stroke-linejoin="round"/>
<path d="M123.6 1079.5 V1069.5 L132 1062.8 L140.4 1069.5 V1079.5 Z M132 1079.5 V1073.0" stroke="#5b5e82" stroke-width="2" fill="none" stroke-linejoin="round"/>
<path d="M123.2 265.3 L132 258.6 L140.8 265.3 Z" stroke="#5b5e82" stroke-width="2" fill="none" stroke-linejoin="round"/><path d="M122.3 276 H141.7" stroke="#5b5e82" stroke-width="2.2"/><path d="M125 267.8 V273.6 M129 267.8 V273.6 M135 267.8 V273.6 M139 267.8 V273.6" stroke="#5b5e82" stroke-width="1.9"/><circle cx="132" cy="262.3" r="1.1" fill="#5b5e82"/>
<path d="M123.2 1338.8999999999999 L132 1332.1999999999998 L140.8 1338.8999999999999 Z" stroke="#5b5e82" stroke-width="2" fill="none" stroke-linejoin="round"/><path d="M122.3 1349.6 H141.7" stroke="#5b5e82" stroke-width="2.2"/><path d="M125 1341.3999999999999 V1347.1999999999998 M129 1341.3999999999999 V1347.1999999999998 M135 1341.3999999999999 V1347.1999999999998 M139 1341.3999999999999 V1347.1999999999998" stroke="#5b5e82" stroke-width="1.9"/><circle cx="132" cy="1335.8999999999999" r="1.1" fill="#5b5e82"/>
<path d="M128.5 315.5 V312.3 H140 V326 H137" stroke="#5b5e82" stroke-width="2" fill="none"/><rect x="124.2" y="316.8" width="11.8" height="13" stroke="#5b5e82" stroke-width="2" fill="none"/><path d="M132.9 320.4 C132.7 319.2 131.6 318.8 130.2 318.8 C128.7 318.8 127.7 319.5 127.7 320.6 C127.7 323 132.9 322 132.9 324.6 C132.9 325.7 131.8 326.3 130.3 326.3 C128.8 326.3 127.7 325.7 127.5 324.5 M130.2 317.6 V327.6" stroke="#5b5e82" stroke-width="1.5" fill="none"/>
<rect x="123.3" y="367.3" width="17.6" height="15.5" stroke="#5b5e82" stroke-width="2" fill="none"/><path d="M123.3 373.5 H140.9" stroke="#5b5e82" stroke-width="2" fill="none"/><path d="M134 379.2 H138.2" stroke="#5b5e82" stroke-width="2"/>
<rect x="123.3" y="1279.3" width="17.6" height="15.5" stroke="#5b5e82" stroke-width="2" fill="none"/><path d="M123.3 1285.5 H140.9" stroke="#5b5e82" stroke-width="2" fill="none"/><path d="M134 1291.2 H138.2" stroke="#5b5e82" stroke-width="2"/>
<circle cx="125" cy="429" r="2" fill="#5b5e82"/>
<circle cx="132" cy="429" r="2" fill="#5b5e82"/>
<circle cx="139" cy="429" r="2" fill="#5b5e82"/>
<rect x="124.3" y="554.3" width="16" height="15.8" stroke="#5b5e82" stroke-width="2" fill="none"/><rect x="128.6" y="552.4" width="7.2" height="4" fill="#fff" stroke="#5b5e82" stroke-width="1.8"/>
<path d="M123 623 V607.5 H130.2 L132.4 610 H141 V623 Z" stroke="#5b5e82" stroke-width="2" fill="none" stroke-linejoin="round"/>
<path d="M123 677 V661.5 H130.2 L132.4 664 H141 V677 Z" stroke="#5b5e82" stroke-width="2" fill="none" stroke-linejoin="round"/><path d="M130.6 666.6 V672.4 H135.2" stroke="#5b5e82" stroke-width="1.8" fill="none"/>
<rect x="124" y="714.2" width="16.2" height="18.4" stroke="#5b5e82" stroke-width="2" fill="none"/><path d="M127.5 714.2 V732.6" stroke="#5b5e82" stroke-width="2" fill="none"/><circle cx="133.5" cy="720.5" r="1.9" fill="#5b5e82"/><path d="M130.2 727.5 C130.6 724.8000000000001 136.4 724.8000000000001 136.8 727.5 Z" fill="#5b5e82"/><path d="M142.8 716.6 V720.6 M142.8 723.6 V727.6" stroke="#5b5e82" stroke-width="2"/>
<path d="M131.8 785.6 L124 778.3 C121 775.3 122 770.3 126 770 C128.6 769.8 130.6 771.2 131.8 773 C133 771.2 135 769.8 137.6 770 C141.6 770.3 142.6 775.3 139.6 778.3 Z" stroke="#5b5e82" stroke-width="2" fill="none" stroke-linejoin="round"/><path d="M121 777.3 H126.2 L128.2 774.2 L130.6 780.5 L133 775.6 L134.5 777.3 H137" stroke="#5b5e82" stroke-width="1.8" fill="none" stroke-linejoin="round"/>
<circle cx="131.6" cy="829.2" r="6" stroke="#5b5e82" stroke-width="2" fill="none"/><path d="M138.6 821.2 A 9.3 9.3 0 0 1 125 836.8" stroke="#5b5e82" stroke-width="2" fill="none"/><path d="M132 837.8 V841 M126.8 841.5 H137.2" stroke="#5b5e82" stroke-width="2" fill="none"/>
<path d="M132.3 874.8 L140.5 877.8 V886.2 C140.5 890.5 136.8 893.2 132.3 895 C127.8 893.2 124.1 890.5 124.1 886.2 V877.8 Z" stroke="#5b5e82" stroke-width="2" fill="none" stroke-linejoin="round"/><path d="M128 885.6 L130.9 888.4 L136.4 882.8" stroke="#5b5e82" stroke-width="2" fill="none"/>
<rect x="123.2" y="1009" width="17.8" height="16" stroke="#5b5e82" stroke-width="2" fill="none"/><path d="M132 1009 V1025" stroke="#5b5e82" stroke-width="2" fill="none"/><path d="M134.8 1013.4 H138.2 M134.8 1016.8 H138.2" stroke="#5b5e82" stroke-width="1.7"/>
<path d="M126.9 1120.8 V1117 H140.9 V1133 H122.9 V1125.8 L127.8 1121.5 L132.9 1125.8 V1133 M127.9 1133 V1129.2" stroke="#5b5e82" stroke-width="2" fill="none" stroke-linejoin="round"/><circle cx="132.8" cy="1121.1" r="1.1" fill="#5b5e82"/><circle cx="136.9" cy="1121.1" r="1.1" fill="#5b5e82"/><circle cx="136.9" cy="1125.1" r="1.1" fill="#5b5e82"/><circle cx="136.9" cy="1129.1" r="1.1" fill="#5b5e82"/>
<circle cx="129.8" cy="1174.1" r="5.1" stroke="#5b5e82" stroke-width="2" fill="none"/><path d="M122.9 1188.6 A 6.9 6.9 0 0 1 136.7 1188.6" stroke="#5b5e82" stroke-width="2" fill="none"/><path d="M137.6 1171.4 A 4.6 4.6 0 0 1 136.3 1180.2 M138.6 1182.9 C140.6 1184.2 141.8 1186.2 142 1188.6" stroke="#5b5e82" stroke-width="2" fill="none"/>
<path d="M127.6 1225.3 A 9.2 9.2 0 0 1 139.6 1236.6 M135.9 1241.4 A 9.2 9.2 0 0 1 123.9 1229.4" stroke="#5b5e82" stroke-width="2" fill="none"/><path d="M137.2 1236 L142.2 1236.2 L139.2 1240.3 Z M126.6 1230 L121.6 1229.8 L124.6 1225.7 Z" fill="#5b5e82" stroke="#5b5e82" stroke-width="1"/><path d="M135.4 1229.6 C134.9 1228.9 133.8 1228.7 132 1228.7 C129.6 1228.7 128.3 1229.3 128.3 1230.6 C128.3 1233.2 135.7 1231.6 135.7 1234.6 C135.7 1235.9 134.3 1236.6 132 1236.6 C130.2 1236.6 128.8 1236.3 128.1 1235.6 M132 1227.6 V1229 M132 1236.4 V1237.8" stroke="#5b5e82" stroke-width="1.7" fill="none"/>
<path d="M121.6 1403 H142" stroke="#5b5e82" stroke-width="2" fill="none" stroke-linecap="round"/><path d="M123.9 1403 V1387 H133.8 V1403 M137.3 1393.1 H139.8 V1403" stroke="#5b5e82" stroke-width="2" fill="none" stroke-linejoin="round"/><path d="M127.6 1391.1 H130.3 M127.6 1395.2 H130.3" stroke="#5b5e82" stroke-width="2" stroke-linecap="round"/>
<rect x="123.2" y="1442.3" width="17.6" height="14.5" stroke="#5b5e82" stroke-width="2" fill="none"/><path d="M128.2 1442.3 V1439.2 H135.8 V1442.3 M123.2 1449.2 H140.8" stroke="#5b5e82" stroke-width="2" fill="none"/><circle cx="132" cy="1450.6" r="1.1" fill="#5b5e82"/>
<circle cx="126.2" cy="1509.3" r="4" stroke="#5b5e82" stroke-width="2" fill="none"/><path d="M129.2 1506.4 L140 1496 M136.6 1499.3 L139 1501.7 M134.2 1501.7 L136.2 1503.6" stroke="#5b5e82" stroke-width="2" fill="none"/>
<path d="M2132.3 149 V144.3 H2116.2 V161.6 H2132.3 V158" stroke="#5b5e82" stroke-width="2" fill="none"/><path d="M2119.8 150.2 H2128.3 M2119.8 154.1 H2125" stroke="#5b5e82" stroke-width="2"/><path d="M2126.2 158.8 L2135 150.6" stroke="#5b5e82" stroke-width="2.2"/>
<rect x="2116.2" y="197.8" width="16.2" height="18.4" stroke="#5b5e82" stroke-width="2" fill="none"/><path d="M2119.7 197.8 V216.20000000000002" stroke="#5b5e82" stroke-width="2" fill="none"/><circle cx="2125.7" cy="204.10000000000002" r="1.9" fill="#5b5e82"/><path d="M2122.3999999999996 211.10000000000002 C2122.7999999999997 208.4 2128.6 208.4 2129.0 211.10000000000002 Z" fill="#5b5e82"/><path d="M2135.0 200.20000000000002 V204.20000000000002 M2135.0 207.20000000000002 V211.20000000000002" stroke="#5b5e82" stroke-width="2"/>
<path d="M2116.2 252.2 H2128.3 L2132.3 256.3 V270 H2116.2 Z" stroke="#5b5e82" stroke-width="2" fill="none" stroke-linejoin="round"/><path d="M2124.2 257.6 V264.6 M2120.7 261.1 H2127.7" stroke="#5b5e82" stroke-width="2.2"/></svg>
</body></html>
